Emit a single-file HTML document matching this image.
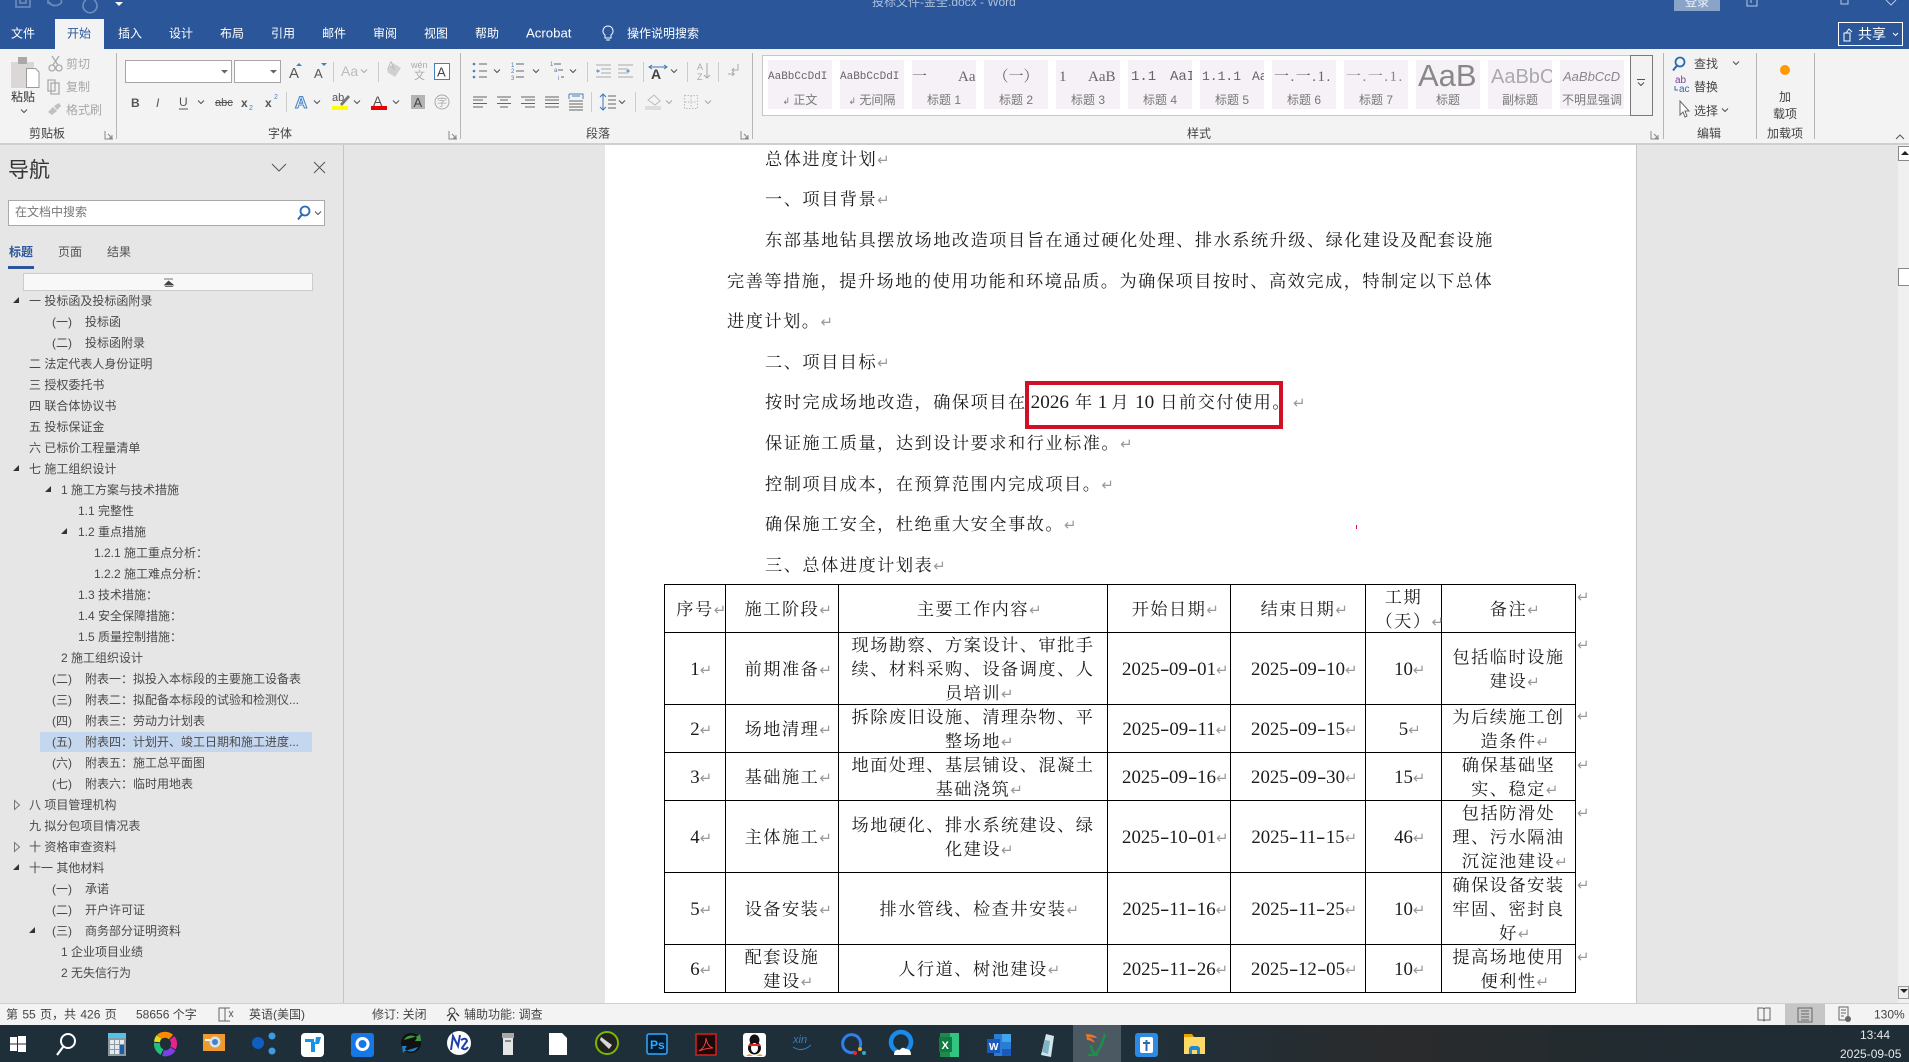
<!DOCTYPE html>
<html lang="zh"><head><meta charset="utf-8"><title>Word</title>
<style>
html,body{margin:0;padding:0;width:1909px;height:1062px;overflow:hidden;background:#e6e6e6}
body{position:relative;font-family:"Liberation Sans","Noto Sans CJK SC",sans-serif;font-size:12px;color:#444}
.a{position:absolute}
svg text{font-family:"Liberation Sans","Noto Sans CJK SC",sans-serif;font-size:12px}
.n{position:absolute;height:20px;line-height:20px;white-space:nowrap;color:#4a4a4a;font-size:12px}
.p{display:inline-block;width:33px}
.d{font-family:"Liberation Serif","Noto Serif CJK SC",serif;font-size:17.2px;letter-spacing:1.5px;color:#1c1c1c}
.l{position:absolute;white-space:nowrap;height:24px;line-height:24px}
.m{font-family:"Liberation Serif",serif;font-size:19.2px;letter-spacing:0;line-height:0}
.m i{font-style:normal;display:inline-block;width:.5em;text-align:center;transform:scaleX(1.5)}
.r{font-family:"DejaVu Sans",sans-serif;font-size:15px;color:#9a9a9a;letter-spacing:0;font-weight:400;line-height:0}
table{position:absolute;left:664px;top:584px;display:grid;grid-template-columns:61px 113px 269px 123px 135px 76px 134px;grid-template-rows:48px 72px 48px 48px 72px 72px 48px;border-top:1px solid #000;border-left:1px solid #000;border-spacing:0}
tbody,tr{display:contents}
td{display:flex;align-items:center;justify-content:center;box-sizing:border-box;border-right:1px solid #000;border-bottom:1px solid #000;padding:0;white-space:nowrap}
td div{text-align:center;line-height:24px;position:relative;top:1.5px}
td .m{font-size:18.8px}
td .r{display:inline-block;width:0}
.st{position:absolute;top:60px;width:64px;height:49px;background:#f5f1f6;overflow:hidden;text-align:center}
.pv{position:absolute;left:0;top:5px;height:24px;line-height:24px;width:100%;white-space:nowrap;text-align:left;color:#666}
.lb{position:absolute;left:0;top:31px;width:100%;height:18px;line-height:18px;color:#777;font-size:12px;white-space:nowrap}
</style></head><body>

<!-- backgrounds -->
<div class="a" style="left:0;top:0;width:1909px;height:49px;background:#2b579a"></div>
<div class="a" style="left:55px;top:19px;width:49px;height:30px;background:#f3f3f3"></div>
<div class="a" style="left:0;top:49px;width:1909px;height:94px;background:#f3f3f3"></div>
<div class="a" style="left:0;top:143px;width:1909px;height:2px;background:#cfcfcf"></div>
<div class="a" style="left:343px;top:145px;width:1px;height:858px;background:#c4c4c4"></div>
<div class="a" style="left:605px;top:145px;width:1032px;height:858px;background:#fff"></div>
<div class="a" style="left:1636px;top:145px;width:1px;height:858px;background:#c4c4c4"></div>
<div class="a" style="left:1898px;top:145px;width:11px;height:858px;background:#f0f0f0"></div>
<div class="a" style="left:1898px;top:146px;width:10px;height:13px;background:#fff;border:1px solid #888;border-right:0"></div>
<div class="a" style="left:1898px;top:268px;width:11px;height:16px;background:#fff;border:1px solid #888;border-right:0"></div>
<div class="a" style="left:0;top:1003px;width:1909px;height:1px;background:#cfcfcf"></div>
<div class="a" style="left:0;top:1004px;width:1909px;height:21px;background:#f3f3f3"></div>
<div class="a" style="left:0;top:1025px;width:1909px;height:37px;background:linear-gradient(90deg,#1f2f3a 0,#1f2f3a 45%,#20303a 60%,#2a2b2c 73%,#222b30 85%,#1f2d36 100%)"></div>
<div class="a" style="left:1785px;top:1004px;width:40px;height:21px;background:#c6c6c6"></div>
<div class="a" style="left:1073px;top:1025px;width:48px;height:37px;background:#4a5962"></div>

<!-- nav pane -->
<div class="a" style="left:8px;top:157px;font-size:21px;line-height:28px;color:#333">导航</div>
<div class="a" style="left:8px;top:200px;width:315px;height:24px;background:#fff;border:1px solid #aaa"></div>
<div class="a" style="left:15px;top:202px;line-height:20px;color:#777">在文档中搜索</div>
<div class="a" style="left:9px;top:242px;line-height:20px;color:#2b579a;font-weight:700">标题</div>
<div class="a" style="left:58px;top:242px;line-height:20px;color:#555">页面</div>
<div class="a" style="left:107px;top:242px;line-height:20px;color:#555">结果</div>
<div class="a" style="left:8px;top:266px;width:26px;height:3px;background:#2b579a"></div>
<div class="a" style="left:23px;top:273px;width:288px;height:16px;background:#f8f8f8;border:1px solid #ccc"></div>
<div class="a" style="left:40px;top:732px;width:272px;height:20px;background:#c5d7ef"></div>

<div class="n" style="left:29px;top:291px">一 投标函及投标函附录</div>
<div class="n" style="left:52px;top:312px"><span class="p">(一)</span>投标函</div>
<div class="n" style="left:52px;top:333px"><span class="p">(二)</span>投标函附录</div>
<div class="n" style="left:29px;top:354px">二 法定代表人身份证明</div>
<div class="n" style="left:29px;top:375px">三 授权委托书</div>
<div class="n" style="left:29px;top:396px">四 联合体协议书</div>
<div class="n" style="left:29px;top:417px">五 投标保证金</div>
<div class="n" style="left:29px;top:438px">六 已标价工程量清单</div>
<div class="n" style="left:29px;top:459px">七 施工组织设计</div>
<div class="n" style="left:61px;top:480px">1 施工方案与技术措施</div>
<div class="n" style="left:78px;top:501px">1.1 完整性</div>
<div class="n" style="left:78px;top:522px">1.2 重点措施</div>
<div class="n" style="left:94px;top:543px">1.2.1 施工重点分析：</div>
<div class="n" style="left:94px;top:564px">1.2.2 施工难点分析：</div>
<div class="n" style="left:78px;top:585px">1.3 技术措施：</div>
<div class="n" style="left:78px;top:606px">1.4 安全保障措施：</div>
<div class="n" style="left:78px;top:627px">1.5 质量控制措施：</div>
<div class="n" style="left:61px;top:648px">2 施工组织设计</div>
<div class="n" style="left:52px;top:669px"><span class="p">(二)</span>附表一：拟投入本标段的主要施工设备表</div>
<div class="n" style="left:52px;top:690px"><span class="p">(三)</span>附表二：拟配备本标段的试验和检测仪...</div>
<div class="n" style="left:52px;top:711px"><span class="p">(四)</span>附表三：劳动力计划表</div>
<div class="n" style="left:52px;top:732px"><span class="p">(五)</span>附表四：计划开、竣工日期和施工进度...</div>
<div class="n" style="left:52px;top:753px"><span class="p">(六)</span>附表五：施工总平面图</div>
<div class="n" style="left:52px;top:774px"><span class="p">(七)</span>附表六：临时用地表</div>
<div class="n" style="left:29px;top:795px">八 项目管理机构</div>
<div class="n" style="left:29px;top:816px">九 拟分包项目情况表</div>
<div class="n" style="left:29px;top:837px">十 资格审查资料</div>
<div class="n" style="left:29px;top:858px">十一 其他材料</div>
<div class="n" style="left:52px;top:879px"><span class="p">(一)</span>承诺</div>
<div class="n" style="left:52px;top:900px"><span class="p">(二)</span>开户许可证</div>
<div class="n" style="left:52px;top:921px"><span class="p">(三)</span>商务部分证明资料</div>
<div class="n" style="left:61px;top:942px">1 企业项目业绩</div>
<div class="n" style="left:61px;top:963px">2 无失信行为</div>

<!-- document -->
<div class="d">
<div class="l" style="left:765px;top:148px">总体进度计划<span class="r">↵</span></div>
<div class="l" style="left:765px;top:188px">一、项目背景<span class="r">↵</span></div>
<div class="l" style="left:765px;top:229px">东部基地钻具摆放场地改造项目旨在通过硬化处理、排水系统升级、绿化建设及配套设施</div>
<div class="l" style="left:727px;top:270px">完善等措施，提升场地的使用功能和环境品质。为确保项目按时、高效完成，特制定以下总体</div>
<div class="l" style="left:727px;top:310px">进度计划。<span class="r">↵</span></div>
<div class="l" style="left:765px;top:351px">二、项目目标<span class="r">↵</span></div>
<div class="l" style="left:765px;top:391px">按时完成场地改造，确保项目在<span class="m" style="margin-left:4px;margin-right:6px">2026</span>年<span class="m" style="margin:0 4px 0 4px">1</span>月<span class="m" style="margin:0 6px 0 5px">10</span>日前交付使用。<span class="r" style="margin-left:2px">↵</span></div>
<div class="l" style="left:765px;top:432px">保证施工质量，达到设计要求和行业标准。<span class="r">↵</span></div>
<div class="l" style="left:765px;top:473px">控制项目成本，在预算范围内完成项目。<span class="r">↵</span></div>
<div class="l" style="left:765px;top:513px">确保施工安全，杜绝重大安全事故。<span class="r">↵</span></div>
<div class="l" style="left:765px;top:554px">三、总体进度计划表<span class="r">↵</span></div>

<table><tbody>
<tr><td><div>序号<span class="r">↵</span></div></td><td><div>施工阶段<span class="r">↵</span></div></td><td><div>主要工作内容<span class="r">↵</span></div></td><td><div>开始日期<span class="r">↵</span></div></td><td><div>结束日期<span class="r">↵</span></div></td><td><div>工期<br>（天）<span class="r">↵</span></div></td><td><div>备注<span class="r">↵</span></div></td></tr>
<tr><td><div><span class="m">1</span><span class="r">↵</span></div></td><td><div>前期准备<span class="r">↵</span></div></td><td><div>现场勘察、方案设计、审批手<br>续、材料采购、设备调度、人<br>员培训<span class="r">↵</span></div></td><td><div><span class="m">2025<i>-</i>09<i>-</i>01</span><span class="r">↵</span></div></td><td><div><span class="m">2025<i>-</i>09<i>-</i>10</span><span class="r">↵</span></div></td><td><div><span class="m">10</span><span class="r">↵</span></div></td><td><div>包括临时设施<br>建设<span class="r">↵</span></div></td></tr>
<tr><td><div><span class="m">2</span><span class="r">↵</span></div></td><td><div>场地清理<span class="r">↵</span></div></td><td><div>拆除废旧设施、清理杂物、平<br>整场地<span class="r">↵</span></div></td><td><div><span class="m">2025<i>-</i>09<i>-</i>11</span><span class="r">↵</span></div></td><td><div><span class="m">2025<i>-</i>09<i>-</i>15</span><span class="r">↵</span></div></td><td><div><span class="m">5</span><span class="r">↵</span></div></td><td><div>为后续施工创<br>造条件<span class="r">↵</span></div></td></tr>
<tr><td><div><span class="m">3</span><span class="r">↵</span></div></td><td><div>基础施工<span class="r">↵</span></div></td><td><div>地面处理、基层铺设、混凝土<br>基础浇筑<span class="r">↵</span></div></td><td><div><span class="m">2025<i>-</i>09<i>-</i>16</span><span class="r">↵</span></div></td><td><div><span class="m">2025<i>-</i>09<i>-</i>30</span><span class="r">↵</span></div></td><td><div><span class="m">15</span><span class="r">↵</span></div></td><td><div>确保基础坚<br>实、稳定<span class="r">↵</span></div></td></tr>
<tr><td><div><span class="m">4</span><span class="r">↵</span></div></td><td><div>主体施工<span class="r">↵</span></div></td><td><div>场地硬化、排水系统建设、绿<br>化建设<span class="r">↵</span></div></td><td><div><span class="m">2025<i>-</i>10<i>-</i>01</span><span class="r">↵</span></div></td><td><div><span class="m">2025<i>-</i>11<i>-</i>15</span><span class="r">↵</span></div></td><td><div><span class="m">46</span><span class="r">↵</span></div></td><td><div>包括防滑处<br>理、污水隔油<br>沉淀池建设<span class="r">↵</span></div></td></tr>
<tr><td><div><span class="m">5</span><span class="r">↵</span></div></td><td><div>设备安装<span class="r">↵</span></div></td><td><div>排水管线、检查井安装<span class="r">↵</span></div></td><td><div><span class="m">2025<i>-</i>11<i>-</i>16</span><span class="r">↵</span></div></td><td><div><span class="m">2025<i>-</i>11<i>-</i>25</span><span class="r">↵</span></div></td><td><div><span class="m">10</span><span class="r">↵</span></div></td><td><div>确保设备安装<br>牢固、密封良<br>好<span class="r">↵</span></div></td></tr>
<tr><td><div><span class="m">6</span><span class="r">↵</span></div></td><td><div>配套设施<br>建设<span class="r">↵</span></div></td><td><div>人行道、树池建设<span class="r">↵</span></div></td><td><div><span class="m">2025<i>-</i>11<i>-</i>26</span><span class="r">↵</span></div></td><td><div><span class="m">2025<i>-</i>12<i>-</i>05</span><span class="r">↵</span></div></td><td><div><span class="m">10</span><span class="r">↵</span></div></td><td><div>提高场地使用<br>便利性<span class="r">↵</span></div></td></tr>
</tbody></table>
<span class="a r" style="left:1577px;top:597px">↵</span>
<span class="a r" style="left:1577px;top:645px">↵</span>
<span class="a r" style="left:1577px;top:716px">↵</span>
<span class="a r" style="left:1577px;top:765px">↵</span>
<span class="a r" style="left:1577px;top:813px">↵</span>
<span class="a r" style="left:1577px;top:885px">↵</span>
<span class="a r" style="left:1577px;top:957px">↵</span>
</div>
<div class="a" style="left:1025px;top:381px;width:250px;height:40px;border:4px solid #d01027"></div>
<div class="a" style="left:1356px;top:525px;width:1px;height:4px;background:#e0102a"></div>

<!-- styles gallery -->
<div class="a" style="left:762px;top:55px;width:867px;height:59px;background:#fff;border:1px solid #c6c6c6"></div>
<div class="a" style="left:1630px;top:55px;width:21px;height:59px;background:#f3f3f3;border:1px solid #7a7a7a"></div>
<div class="st" style="left:768px"><div class="pv" style="font:11px/24px 'Liberation Mono',monospace">AaBbCcDdI</div><div class="lb"><span style="font-size:9px">↲</span> 正文</div></div>
<div class="st" style="left:840px"><div class="pv" style="font:11px/24px 'Liberation Mono',monospace">AaBbCcDdI</div><div class="lb"><span style="font-size:9px">↲</span> 无间隔</div></div>
<div class="st" style="left:912px"><div class="pv" style="font-size:15px;font-family:'Liberation Serif','Noto Serif CJK SC',serif">一<span style="position:absolute;left:46px">Aa</span></div><div class="lb">标题 1</div></div>
<div class="st" style="left:984px"><div class="pv" style="font-size:15px;font-family:'Liberation Serif','Noto Serif CJK SC',serif;text-align:center">（一）</div><div class="lb">标题 2</div></div>
<div class="st" style="left:1056px"><div class="pv" style="font-size:15px;font-family:'Liberation Serif','Noto Serif CJK SC',serif;padding-left:3px">1<span style="position:absolute;left:32px">AaB</span></div><div class="lb">标题 3</div></div>
<div class="st" style="left:1128px"><div class="pv" style="font-size:14px;font-family:'Liberation Mono',monospace;padding-left:3px">1.1<span style="position:absolute;left:42px">AaI</span></div><div class="lb">标题 4</div></div>
<div class="st" style="left:1200px"><div class="pv" style="font-size:13px;font-family:'Liberation Mono',monospace;padding-left:2px">1.1.1<span style="position:absolute;left:52px">Aa</span></div><div class="lb">标题 5</div></div>
<div class="st" style="left:1272px"><div class="pv" style="font-size:15px;letter-spacing:1.5px;font-family:'Liberation Serif','Noto Serif CJK SC',serif;padding-left:2px">一.一.1.</div><div class="lb">标题 6</div></div>
<div class="st" style="left:1344px"><div class="pv" style="font-size:15px;letter-spacing:1.5px;color:#888;font-family:'Liberation Serif','Noto Serif CJK SC',serif;padding-left:2px">一.一.1.</div><div class="lb">标题 7</div></div>
<div class="st" style="left:1416px"><div class="pv" style="font-size:31px;top:-2px;line-height:36px;color:#888;font-weight:400;padding-left:2px">AaB</div><div class="lb">标题</div></div>
<div class="st" style="left:1488px"><div class="pv" style="font-size:20px;color:#aaa;padding-left:3px">AaBbC</div><div class="lb">副标题</div></div>
<div class="st" style="left:1560px"><div class="pv" style="font-size:13px;font-style:italic;color:#888;padding-left:3px">AaBbCcD</div><div class="lb">不明显强调</div></div>

<!-- chrome overlay -->
<svg class="a" style="left:0;top:0" width="1909" height="1062" viewBox="0 0 1909 1062" xmlns="http://www.w3.org/2000/svg">
<defs><path id="c" d="M-3-1.5l3 3 3-3" fill="none" stroke="#555" stroke-width="1.1"/><path id="cg" d="M-3-1.5l3 3 3-3" fill="none" stroke="#aaa" stroke-width="1.1"/></defs>

<!-- title bar -->
<g fill="none" stroke="#6f8db9" stroke-width="1.6"><path d="M16 0v7h14V0M20 0v3h6V0"/><path d="M48 2q5 5 10 3t3-5M48 0v3h3"/><path d="M86 0a7 7 0 1 0 8 0"/></g>
<path d="M115 2h8l-4 4z" fill="#fff"/>
<text x="872" y="6" fill="#aebfd9">投标文件-金全.docx  -  Word</text>
<rect x="1674" y="0" width="46" height="11" fill="#8aa3c8"/><text x="1685" y="6" fill="#f0f4f9">登录</text>
<g fill="none" stroke="#b9c8df"><path d="M1747 0v6h10v-6M1751 0v3"/><path d="M1841 0v4h7v-4"/><path d="M1886 0l5 5 5-5"/></g>
<rect x="1838.5" y="22.5" width="64" height="23" fill="none" stroke="#fff"/>
<path d="M1844 33h6v8h-6zM1846 33l3-4 3 3" fill="none" stroke="#fff"/>
<text x="1858" y="39" fill="#fff" style="font-size:14px">共享</text>
<path d="M1893 33l2.5 2.5 2.5-2.5" fill="none" stroke="#fff"/>

<!-- tabs -->
<g fill="#fff">
<text x="11" y="37.5">文件</text><text x="118" y="37.5">插入</text><text x="169" y="37.5">设计</text><text x="220" y="37.5">布局</text><text x="271" y="37.5">引用</text><text x="322" y="37.5">邮件</text><text x="373" y="37.5">审阅</text><text x="424" y="37.5">视图</text><text x="475" y="37.5">帮助</text><text x="526" y="37.5" style="font-size:13.2px">Acrobat</text><text x="627" y="37.5">操作说明搜索</text></g>
<text x="67" y="37.5" fill="#2b579a">开始</text>
<path d="M608 26a5 5 0 0 0-3 9v3h6v-3a5 5 0 0 0-3-9zM606 40h4" fill="none" stroke="#fff"/>

<!-- group separators -->
<g stroke="#b5b5b5"><path d="M116.5 53v86M460.5 53v86M752.5 53v86M1663.5 53v86M1756.5 53v86M1814.5 53v86"/></g>
<g fill="#444"><text x="29" y="137.5">剪贴板</text><text x="268" y="137.5">字体</text><text x="586" y="137.5">段落</text><text x="1187" y="137.5">样式</text><text x="1697" y="137.5">编辑</text><text x="1767" y="137.5">加载项</text></g>
<g fill="none" stroke="#888"><path d="M105 131v8h8M108 134l4 4M112 135v3h-3M449 131v8h8M452 134l4 4M456 135v3h-3M741 131v8h8M744 134l4 4M748 135v3h-3M1651 131v8h8M1654 134l4 4M1658 135v3h-3"/></g>
<path d="M1896 139l4-4 4 4" fill="none" stroke="#555"/>

<!-- clipboard -->
<rect x="11" y="62" width="23" height="26" fill="#dbd7d7"/><rect x="18" y="57" width="9" height="7" fill="#a9a9a9"/><path d="M26.5 68.5h9l3.5 3.5v15.5h-12.500z" fill="#fff" stroke="#9a9a9a"/>
<text x="11" y="101" fill="#333">粘贴</text><use href="#c" x="24" y="111"/>
<g fill="none" stroke="#aaa" stroke-width="1.3"><circle cx="52" cy="68" r="3"/><circle cx="59" cy="68" r="3"/><path d="M53 65l6-9M58 65l-6-9"/><path d="M48 80h7v11h-7zM51 83h8v11h-8z"/></g>
<path d="M48 112l5-5 4 4-5 4zM54 106l5-3 2 3-4 4z" fill="#c0c0c0"/>
<g fill="#a8a8a8"><text x="66" y="68">剪切</text><text x="66" y="91">复制</text><text x="66" y="114">格式刷</text></g>

<!-- font row -->
<rect x="125.5" y="60.5" width="106" height="22" fill="#fff" stroke="#a6a6a6"/><rect x="234.5" y="60.5" width="46" height="22" fill="#fff" stroke="#a6a6a6"/>
<path d="M221 70h7l-3.500 3.500zM270 70h7l-3.500 3.500z" fill="#666"/>
<g fill="#555"><text x="289" y="78" style="font-size:15px">A</text><text x="314" y="78" style="font-size:13px">A</text></g>
<path d="M296 66l3-3 3 3zM321 63h6l-3 3z" fill="#4a7ebb"/>
<text x="341" y="76" fill="#bbb" style="font-size:14px">Aa</text><use href="#cg" x="364" y="71"/>
<path d="M333.500 62v20M378.500 62v20M286.500 92v20" stroke="#ccc"/>
<path d="M387 72l6-9 8 5-6 9z" fill="#d0d0d0"/><text x="387" y="70" fill="#bbb" style="font-size:12px">A</text>
<text x="411" y="68" fill="#aaa" style="font-size:9px">wén</text><text x="414" y="79" fill="#aaa" style="font-size:11px">文</text>
<rect x="434.500" y="63.500" width="15" height="16" fill="#fff" stroke="#4a7ebb"/><text x="437" y="76.500" fill="#444" style="font-size:13px">A</text>

<g fill="#555">
<text x="131" y="107" style="font-size:12px;font-weight:700">B</text>
<text x="156" y="107" style="font-size:12px;font-style:italic">I</text>
<text x="179" y="106" style="font-size:12px">U</text><path d="M179 109h9" stroke="#555"/>
<text x="215" y="106" style="font-size:11px">abc</text><path d="M215 102.500h18" stroke="#555"/>
<text x="241" y="107" style="font-size:12px;font-weight:700">x</text>
<text x="265" y="107" style="font-size:12px;font-weight:700">x</text></g>
<text x="249" y="110" fill="#4a7ebb" style="font-size:7px">2</text><text x="274" y="99" fill="#4a7ebb" style="font-size:7px">2</text>
<use href="#c" x="201" y="102"/>
<text x="295" y="108" fill="#fff" stroke="#4a86c6" stroke-width="1.1" style="font-size:17px;font-weight:700">A</text><use href="#c" x="317" y="102"/>
<text x="332" y="101" fill="#555" style="font-size:11px">ab</text><path d="M340 104l8-9 2 2-8 9z" fill="#777"/><rect x="332" y="106" width="16" height="4" fill="#ff0"/><use href="#c" x="357" y="102"/>
<text x="373" y="106" fill="#555" style="font-size:14px">A</text><rect x="371" y="106" width="16" height="4" fill="#e60000"/><use href="#c" x="396" y="102"/>
<rect x="411" y="95" width="14" height="14" fill="#b4b4b4"/><text x="413.500" y="107" fill="#444" style="font-size:13px">A</text>
<circle cx="442" cy="102" r="7" fill="none" stroke="#aaa"/><text x="437" y="106" fill="#aaa" style="font-size:10px">字</text>

<!-- paragraph row 1 -->
<g fill="#4a7ebb"><circle cx="474" cy="64" r="1.300"/><circle cx="474" cy="71" r="1.300"/><circle cx="474" cy="77" r="1.300"/></g>
<path d="M479 64h8M479 71h8M479 77h8M516 64h8M516 71h8M516 77h8M554 64h7M558 70h5M561 77h3" stroke="#666" fill="none"/>
<g fill="#4a7ebb"><text x="511" y="67" style="font-size:6px">1</text><text x="511" y="73" style="font-size:6px">2</text><text x="511" y="80" style="font-size:6px">3</text><text x="550" y="66" style="font-size:6px">1</text><text x="554" y="72" style="font-size:6px">a</text><text x="558" y="80" style="font-size:6px">i</text></g>
<use href="#c" x="497" y="71"/><use href="#c" x="536" y="71"/><use href="#c" x="573" y="71"/>
<path d="M587.500 62v20M643.500 62v20M687.500 62v20M718.500 62v20M591.500 92v20M635.500 92v20" stroke="#ccc"/>
<path d="M596 65h15M601 69h10M601 73h10M596 77h15M633 65h-15M628 69h-10M628 73h-10M633 77h-15" stroke="#aaa"/>
<path d="M600 71l-3-2v4zM626 71l3-2v4z" fill="#6d9ac9"/><path d="M596 71h4M626 71h4" stroke="#6d9ac9"/>
<text x="651" y="79" fill="#444" style="font-size:14px;font-weight:700">A</text><path d="M652 65l-3 2 3 2M664 65l3 2-3 2M650 67h16" fill="none" stroke="#3a77b8"/><use href="#c" x="674" y="71"/>
<g fill="#aaa"><text x="697" y="70" style="font-size:9px">A</text><text x="697" y="80" style="font-size:9px">Z</text></g><path d="M707 63v15M704 75l3 3 3-3" fill="none" stroke="#aaa"/>
<path d="M738 64v6h-6M734 68l-2 2 2 2M728 74h7M732 72l2 2-2 2" fill="none" stroke="#aaa"/>

<!-- paragraph row 2 -->
<g stroke="#666" fill="none"><path d="M473 97h14M473 100h10M473 103.500h14M473 107h10"/><path d="M497 97h14M500 100h8M497 103.500h14M500 107h8"/><path d="M521 97h14M525 100h10M521 103.500h14M525 107h10"/><path d="M545 97h14M545 100h14M545 103.500h14M545 107h14"/></g>
<g stroke="#4a7ebb" fill="none"><path d="M569 94h14v5M569 94v5M572 96h8"/></g>
<path d="M569 101h14M569 104h14M569 107h14M569 110h14" stroke="#666"/>
<path d="M603 94v16M600 97l3-3 3 3M600 107l3 3 3-3" fill="none" stroke="#3a77b8"/><path d="M608 96h8M608 100h8M608 104h8M608 108h8" stroke="#666"/><use href="#c" x="622" y="102"/>
<path d="M648 100l6-5 6 6-5 4z" fill="none" stroke="#bbb"/><rect x="645" y="106" width="16" height="4" fill="#ddd"/><use href="#cg" x="669" y="102"/>
<rect x="684.500" y="95.500" width="13" height="13" fill="none" stroke="#bbb" stroke-dasharray="1.500 1.500"/><path d="M691 96v12M685 102h12" stroke="#bbb" stroke-dasharray="1.500 1.500"/><use href="#cg" x="708" y="102"/>

<use href="#c" x="1641" y="84"/><path d="M1637 79.500h8" stroke="#555"/>

<!-- editing group -->
<circle cx="1680" cy="62" r="4.500" fill="none" stroke="#2b6cb0" stroke-width="1.800"/><path d="M1677 65.500l-4 5" stroke="#2b6cb0" stroke-width="2"/>
<g fill="#444"><text x="1694" y="68">查找</text><text x="1694" y="91">替换</text><text x="1694" y="115">选择</text></g>
<use href="#c" x="1736" y="63"/><use href="#c" x="1725" y="110"/>
<text x="1675" y="83" fill="#7b3fa6" style="font-size:10px">ab</text><text x="1679" y="92" fill="#2b6cb0" style="font-size:10px">ac</text><path d="M1675 86v4h3" fill="none" stroke="#2b6cb0"/>
<path d="M1680 101l0 14 3-3 2 5 2-1-2-5h4z" fill="#fff" stroke="#666"/>
<circle cx="1785" cy="70" r="5" fill="#f90"/><text x="1779" y="101" fill="#444">加</text><text x="1773" y="118" fill="#444">载项</text>

<!-- nav icons -->
<path d="M272 164l7 7 7-7M314 162l11 11M325 162l-11 11" fill="none" stroke="#555"/>
<circle cx="305" cy="211" r="4.500" fill="none" stroke="#2b6cb0" stroke-width="1.800"/><path d="M302 214.500l-4 5" stroke="#2b6cb0" stroke-width="2"/>
<use href="#c" x="318" y="213"/>
<path d="M164 279h9M168.500 281l-4 4h9zM165 286.500h8" fill="#444" stroke="#444" stroke-width=".7"/>
<g fill="#333"><path d="M19 297v6h-6zM19 465v6h-6zM51 486v6h-6zM67 528v6h-6zM19 864v6h-6zM35 927v6h-6z"/></g>
<g fill="none" stroke="#777"><path d="M14.500 800.500v9l5-4.500zM14.500 842.500v9l5-4.500z"/></g>

<!-- scrollbar arrows -->
<path d="M1901 155l4-4 4 4z" fill="#222"/><path d="M1900 989h8l-4 4z" fill="#222"/><rect x="1898.500" y="986.500" width="10" height="12" fill="none" stroke="#999"/>

<!-- status bar -->
<g fill="#444"><text x="6" y="1018.500" style="word-spacing:1px">第 55 页，共 426 页</text><text x="136" y="1018.500">58656 个字</text><text x="249" y="1018.500">英语(美国)</text><text x="372" y="1018.500">修订: 关闭</text><text x="464" y="1018.500">辅助功能: 调查</text><text x="1874" y="1018.500">130%</text></g>
<path d="M219 1008h6v13h-6zM225 1008h5M225 1021h5M229 1011l4 6M233 1011l-4 6" fill="none" stroke="#666"/>
<circle cx="452" cy="1011" r="3" fill="none" stroke="#444"/><path d="M449 1021l3-6 4 6M456 1013l3 3M447 1016l3-2" fill="none" stroke="#333" stroke-width="1.300"/>
<path d="M1758 1008h5l1 1 1-1h5v12h-5l-1 1-1-1h-5zM1764 1009v11" fill="none" stroke="#666"/>
<path d="M1798 1008h14v14h-14zM1801 1011h8M1801 1014h8M1801 1017h8M1801 1020h8" fill="none" stroke="#666"/>
<path d="M1839 1007h9v13h-9zM1841 1010h5M1841 1013h5M1841 1016h3" fill="none" stroke="#666"/><circle cx="1848" cy="1019" r="3" fill="#666"/>

<!-- taskbar -->
<g fill="#fff"><rect x="10" y="1037" width="7" height="6.500"/><rect x="18" y="1036" width="8" height="7.500"/><rect x="10" y="1044.500" width="7" height="6.500"/><rect x="18" y="1044.500" width="8" height="7.500"/></g>
<circle cx="68" cy="1041" r="7" fill="none" stroke="#fff" stroke-width="2"/><path d="M63 1047l-6 8" stroke="#fff" stroke-width="2.200"/>
<rect x="108" y="1033" width="18" height="23" fill="#8c9aa3"/><rect x="108" y="1033" width="18" height="5" fill="#4fc3e8"/><g fill="#e5eaec"><rect x="110" y="1040" width="4" height="4"/><rect x="115" y="1040" width="4" height="4"/><rect x="120" y="1040" width="4" height="4"/><rect x="110" y="1045" width="4" height="4"/><rect x="115" y="1045" width="4" height="4"/><rect x="110" y="1050" width="4" height="4"/><rect x="115" y="1050" width="4" height="4"/></g><rect x="120" y="1045" width="4" height="9" fill="#1b5fa8"/>
<g fill="none" stroke-width="6"><path d="M159 1037a9 9 0 0 1 12 0" stroke="#ff8a00"/><path d="M172 1038a9 9 0 0 1 1 10" stroke="#e6248b"/><path d="M173 1049a9 9 0 0 1-10 4" stroke="#7b3fe4"/><path d="M162 1052a9 9 0 0 1-5-9" stroke="#21c07a"/><path d="M157 1042a9 9 0 0 1 2-5" stroke="#d8e020"/></g>
<rect x="203" y="1034" width="22" height="17" fill="#ee9a2e"/><circle cx="215" cy="1042" r="5.500" fill="#cfe4f4"/><circle cx="215" cy="1042" r="3" fill="#4a80c0"/><rect x="205" y="1039" width="5" height="2" fill="#fff"/>
<circle cx="258" cy="1043" r="6" fill="#0f5fc1"/><circle cx="272" cy="1036" r="3.500" fill="#3d9ae0"/><circle cx="272" cy="1051" r="3.500" fill="#3d9ae0"/>
<rect x="301" y="1033" width="23" height="24" rx="4" fill="#fff"/><path d="M305 1039h9v3h-9zM311 1042h4v10h-4zM316 1037h5l-2 7h-4z" fill="#1593e5"/>
<rect x="351" y="1033" width="23" height="24" rx="3" fill="#1677e6"/><circle cx="362.500" cy="1044" r="5.500" fill="none" stroke="#fff" stroke-width="3"/>
<circle cx="411" cy="1043" r="10" fill="#111"/><path d="M404 1040a8 8 0 0 1 13-2l-2 3h6l-1-7-2 2" fill="#3f9a3c"/><path d="M418 1047a8 8 0 0 1-13 2l2-3h-5l1 7 2-2" fill="#1f7fc7"/>
<circle cx="459" cy="1043" r="12" fill="#fff"/><path d="M451 1050l2-14 5 10 2-11M461 1040q5-3 6 1l-5 7q3 3 6-1" fill="none" stroke="#1f3fae" stroke-width="2"/>
<rect x="503" y="1038" width="10" height="17" fill="#e5e5e5"/><rect x="502" y="1033" width="12" height="5" fill="#a8a8a8"/><rect x="505" y="1040" width="6" height="2" fill="#888"/>
<path d="M549 1033h13l5 5v17h-18z" fill="#fff"/>
<circle cx="607" cy="1043" r="11" fill="#222" stroke="#7ab800" stroke-width="2"/><path d="M601 1037l11 8-3 4-9-9z" fill="#d8d8d8"/>
<rect x="647" y="1034" width="20" height="20" rx="2" fill="#001e36" stroke="#31a8ff" stroke-width="1.500"/><text x="650" y="1049" fill="#31a8ff" style="font-size:12px;font-weight:700">Ps</text>
<rect x="696" y="1034" width="20" height="21" fill="#1a0a0a" stroke="#d81e1e" stroke-width="1.500"/><path d="M699 1051c5-3 7-8 7-13 1 6 3 9 7 10-5 0-9 1-14 3z" fill="none" stroke="#f04040"/>
<rect x="743" y="1033" width="23" height="24" rx="3" fill="#fff"/><ellipse cx="754.500" cy="1040" rx="5" ry="5.500" fill="#111"/><ellipse cx="754.500" cy="1048" rx="6.500" ry="6.500" fill="#111"/><ellipse cx="754.500" cy="1048" rx="3.500" ry="5" fill="#fff"/><rect x="749" y="1044" width="11" height="2" fill="#e22"/><path d="M749 1054l-3 2h7zM760 1054l3 2h-7z" fill="#f90"/>
<text x="793" y="1043" fill="#2f7fc8" style="font-size:11px;font-style:italic">xin</text><path d="M793 1047q9 6 18-2" fill="none" stroke="#2f7fc8"/>
<path d="M855 1052a9 9 0 1 1 5-5" fill="none" stroke="#2f80ed" stroke-width="3"/><circle cx="860" cy="1049" r="2" fill="#f5a623"/><circle cx="855" cy="1053" r="2" fill="#e23"/><circle cx="864" cy="1053" r="2" fill="#3ac"/>
<circle cx="901" cy="1042" r="10" fill="none" stroke="#1b8bea" stroke-width="4.500"/><path d="M894 1055q0-6 6-5 2-4 6-1 5 0 5 6z" fill="#fff"/>
<rect x="940" y="1033" width="12" height="24" fill="#1f8a4c"/><rect x="950" y="1033" width="9" height="24" fill="#33c481"/><rect x="939" y="1037" width="13" height="15" fill="#107c41"/><text x="941.500" y="1049" fill="#fff" style="font-size:11px;font-weight:700">X</text>
<rect x="994" y="1034" width="17" height="22" fill="#2b7cd3"/><rect x="1002" y="1034" width="9" height="8" fill="#41a5ee"/><rect x="1002" y="1049" width="9" height="7" fill="#185abd"/><rect x="987" y="1039" width="13" height="14" fill="#185abd"/><text x="989" y="1050" fill="#fff" style="font-size:10px;font-weight:700">W</text>
<path d="M1041 1055l5-21 8 2-3 21z" fill="#cfe6ea"/><path d="M1042 1052l3-12 5 1-2 13z" fill="#7fb4c4"/>
<path d="M1086 1034c6 0 10 2 11 4-3 0-7-1-9-1 3 1 6 3 7 6-3-2-6-3-8-3z" fill="#e8762b"/><path d="M1091 1045q1 8 5 9 5-6 9-20" fill="none" stroke="#1d8f4a" stroke-width="2.500"/><path d="M1088 1055h10" stroke="#1d8f4a" stroke-width="2"/>
<rect x="1135" y="1033" width="23" height="24" rx="3" fill="#2b8ae6"/><rect x="1140" y="1037" width="13" height="16" rx="2" fill="#fff"/><path d="M1143 1043h7M1146.500 1040v11" stroke="#2b6cb0" stroke-width="2"/>
<rect x="1184" y="1037" width="21" height="17" fill="#ffd966"/><path d="M1184 1037v-3h8l2 3z" fill="#e8a200"/><path d="M1189 1054v-5a3 3 0 0 1 3-3h5a3 3 0 0 1 3 3v5h-3v-4h-5v4z" fill="#1f88d9"/>
<g fill="#e6e9ea"><text x="1860" y="1039">13:44</text><text x="1840" y="1058">2025-09-05</text></g>
</svg>
</body></html>
